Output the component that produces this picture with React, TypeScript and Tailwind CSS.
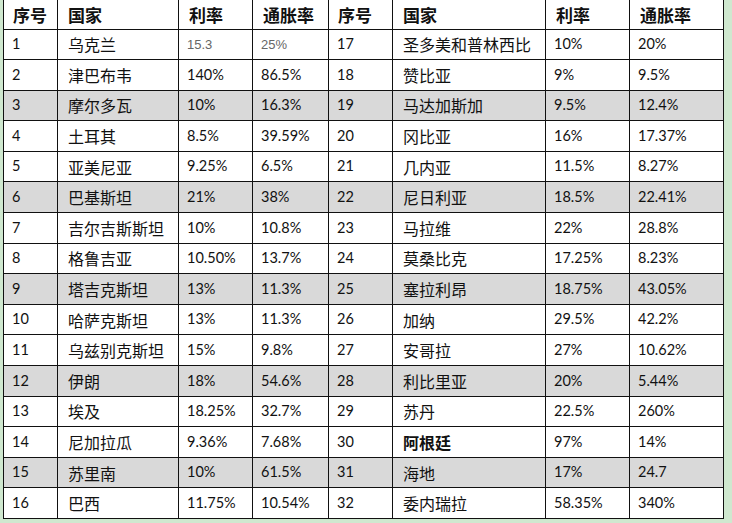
import React from "react";

type Row = [string, string, string, string, string, string, string, string];

const rows: Row[] = [
  ["1", "乌克兰", "15.3", "25%", "17", "圣多美和普林西比", "10%", "20%"],
  ["2", "津巴布韦", "140%", "86.5%", "18", "赞比亚", "9%", "9.5%"],
  ["3", "摩尔多瓦", "10%", "16.3%", "19", "马达加斯加", "9.5%", "12.4%"],
  ["4", "土耳其", "8.5%", "39.59%", "20", "冈比亚", "16%", "17.37%"],
  ["5", "亚美尼亚", "9.25%", "6.5%", "21", "几内亚", "11.5%", "8.27%"],
  ["6", "巴基斯坦", "21%", "38%", "22", "尼日利亚", "18.5%", "22.41%"],
  ["7", "吉尔吉斯斯坦", "10%", "10.8%", "23", "马拉维", "22%", "28.8%"],
  ["8", "格鲁吉亚", "10.50%", "13.7%", "24", "莫桑比克", "17.25%", "8.23%"],
  ["9", "塔吉克斯坦", "13%", "11.3%", "25", "塞拉利昂", "18.75%", "43.05%"],
  ["10", "哈萨克斯坦", "13%", "11.3%", "26", "加纳", "29.5%", "42.2%"],
  ["11", "乌兹别克斯坦", "15%", "9.8%", "27", "安哥拉", "27%", "10.62%"],
  ["12", "伊朗", "18%", "54.6%", "28", "利比里亚", "20%", "5.44%"],
  ["13", "埃及", "18.25%", "32.7%", "29", "苏丹", "22.5%", "260%"],
  ["14", "尼加拉瓜", "9.36%", "7.68%", "30", "阿根廷", "97%", "14%"],
  ["15", "苏里南", "10%", "61.5%", "31", "海地", "17%", "24.7"],
  ["16", "巴西", "11.75%", "10.54%", "32", "委内瑞拉", "58.35%", "340%"],
];

const widths = ["w-[54px]", "w-[121px]", "w-[74px]", "w-[76px]", "w-[64px]", "w-[153px]", "w-[84px]", "w-[94px]"];
const headers = ["序号", "国家", "利率", "通胀率", "序号", "国家", "利率", "通胀率"];

const numFont = "font-['Lato','Liberation_Sans',sans-serif] text-[14.5px]";
const cjkFont = "font-['Noto_Sans_CJK_SC',sans-serif] text-[16px]";

export default function App() {
  return (
    <div className="w-[732px] h-[523px] bg-[#cfe8cf] pl-[3px] overflow-hidden">
      <table className="table-fixed border-collapse w-[721px] bg-white text-[#111]">
        <colgroup>
          {widths.map((w, i) => (
            <col key={i} className={w} />
          ))}
        </colgroup>
        <thead>
          <tr className="h-[29px]">
            {headers.map((h, i) => (
              <th
                key={i}
                className={`border border-t-0 border-[#111] text-left align-middle font-bold font-['Noto_Sans_CJK_SC',sans-serif] text-[17px] leading-none ${i === 0 || i === 4 ? "pl-[9px]" : "pl-[10px]"}`}
              >
                {h}
              </th>
            ))}
          </tr>
        </thead>
        <tbody>
          {rows.map((r, ri) => {
            const gray = (ri + 1) % 3 === 0;
            return (
              <tr key={ri} className={`h-[30.6px] ${gray ? "bg-[#d9d9d9]" : "bg-white"}`}>
                {r.map((c, ci) => {
                  const isCjk = ci === 1 || ci === 5;
                  const faded = ri === 0 && (ci === 2 || ci === 3);
                  const bold = ri === 13 && ci === 5;
                  let cls = isCjk ? cjkFont : numFont;
                  if (faded) cls = "font-['Liberation_Sans',sans-serif] text-[13px] text-[#666]";
                  return (
                    <td
                      key={ci}
                      className={`border border-[#111] align-middle leading-none whitespace-nowrap ${isCjk ? "pl-[10px]" : "pl-[8px]"} ${cls} ${bold ? "font-bold" : ""}`}
                    >
                      {c}
                    </td>
                  );
                })}
              </tr>
            );
          })}
        </tbody>
      </table>
    </div>
  );
}
